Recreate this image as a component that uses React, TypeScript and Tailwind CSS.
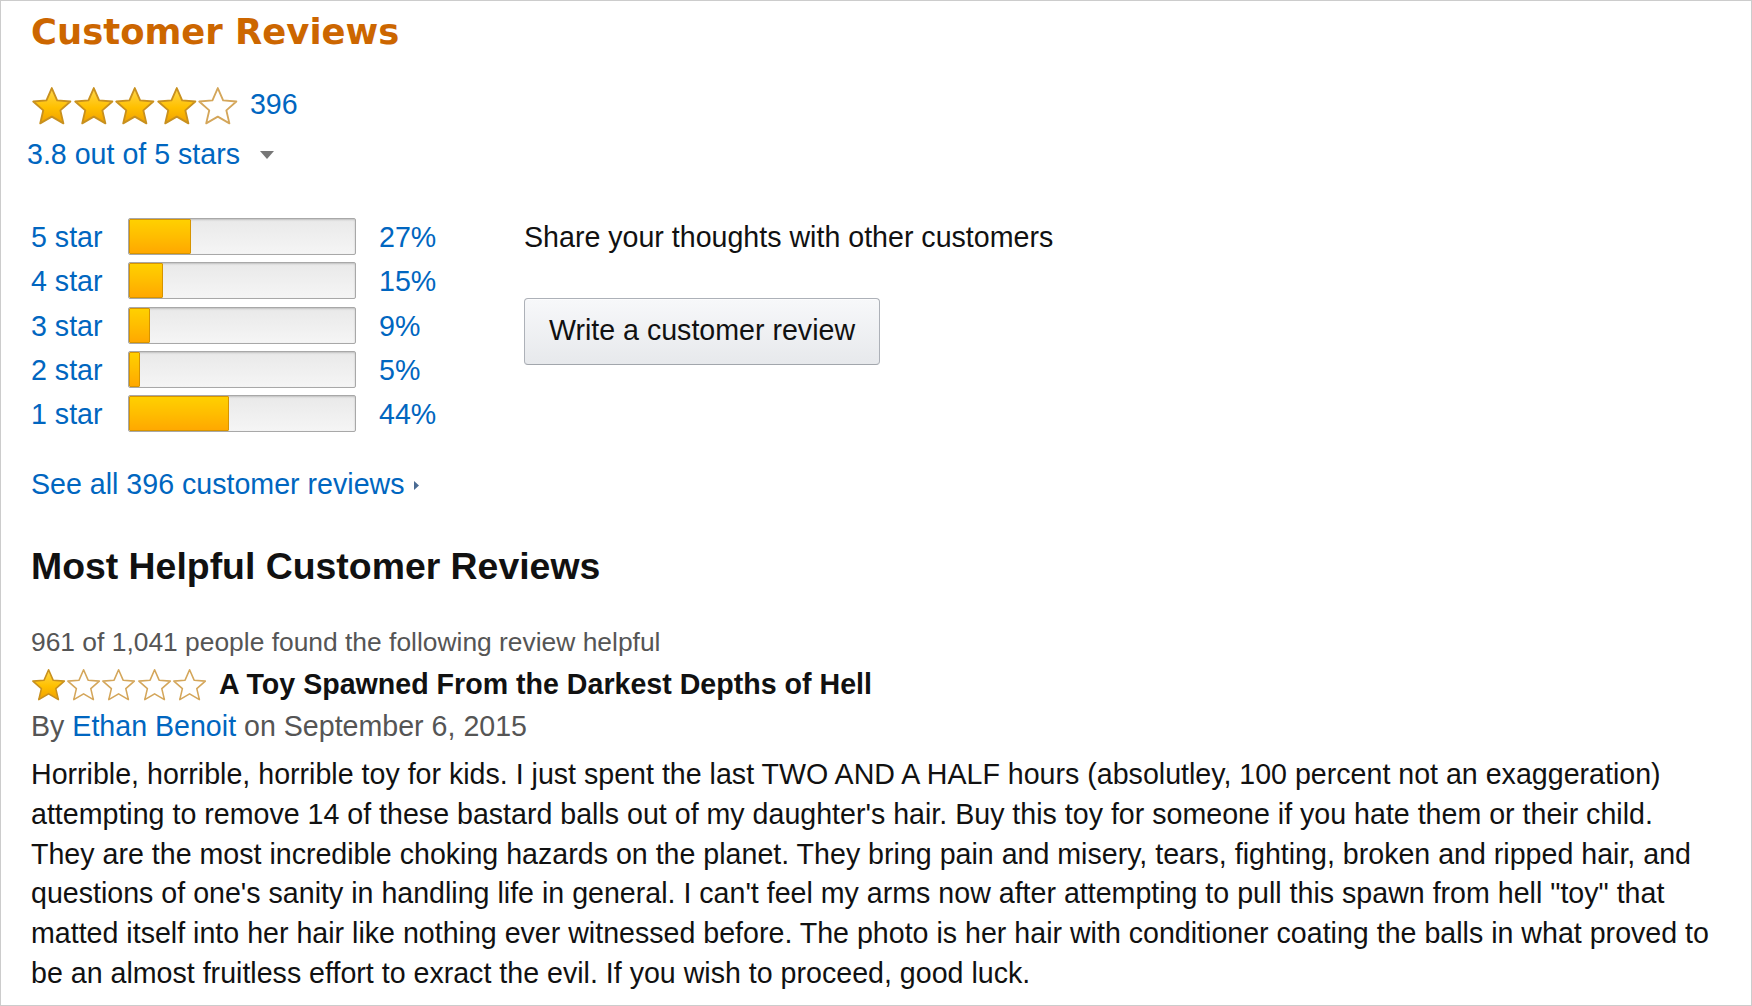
import React, { useId } from "react";

const STAR_POINTS =
  "20,2 25.2,14 38.1,15.1 28.3,23.7 31.3,36.4 20,29.8 8.7,36.4 11.7,23.7 1.9,15.1 14.8,14";

function Star({ filled, className }: { filled: boolean; className: string }) {
  const id = useId().replace(/:/g, "");
  return (
    <svg viewBox="0 0 40 38" className={className}>
      <defs>
        <linearGradient id={`g${id}`} x1="0" y1="0" x2="0" y2="1">
          <stop offset="0" stopColor="#ffd84d" />
          <stop offset="0.55" stopColor="#ffc000" />
          <stop offset="1" stopColor="#f0a000" />
        </linearGradient>
      </defs>
      <polygon
        points={STAR_POINTS}
        fill={filled ? `url(#g${id})` : "#ffffff"}
        stroke={filled ? "#c8901e" : "#d4a65a"}
        strokeWidth="1.8"
        strokeLinejoin="round"
      />
    </svg>
  );
}

const rows = [
  { label: "5 star", pct: 27 },
  { label: "4 star", pct: 15 },
  { label: "3 star", pct: 9 },
  { label: "2 star", pct: 5 },
  { label: "1 star", pct: 44 },
];

export default function App() {
  return (
    <div className="w-[1752px] h-[1006px] box-border border border-[#cccccc] bg-white pl-[30px] pt-[11px] font-['Liberation_Sans',Arial,sans-serif] text-[#111111] overflow-hidden">
      <h2 className="font-['DejaVu_Sans',Verdana,sans-serif] font-bold text-[35.4px] leading-[40px] text-[#cc6600]">
        Customer Reviews
      </h2>

      <div className="mt-[34px] flex items-center h-[39px]">
        <div className="flex">
          {[1, 2, 3, 4, 5].map((i) => (
            <Star key={i} filled={i <= 4} className="w-[41.6px] h-[39px]" />
          ))}
        </div>
        <span className="ml-[11px] -mt-[4px] text-[28.6px] leading-[34px] text-[#0066c0]">396</span>
      </div>

      <div className="mt-[12px] -ml-[4px] flex items-center h-[34px]">
        <span className="text-[28.6px] leading-[34px] text-[#0066c0]">3.8 out of 5 stars</span>
        <svg viewBox="0 0 14 8" className="ml-[20px] mt-[2px] w-[14px] h-[8px]">
          <polygon points="0,0 14,0 7,8" fill="#777777" />
        </svg>
      </div>

      <div className="mt-[47px] flex">
        <div className="flex flex-col gap-[7.25px]">
          {rows.map((r) => (
            <div key={r.label} className="flex items-center h-[37px]">
              <span className="w-[97px] pt-[1px] text-[28.6px] leading-[34px] text-[#0066c0]">{r.label}</span>
              <div className="w-[228px] h-[37px] box-border border border-[#a8a8a8] rounded-[2px] bg-linear-to-b from-[#e9e9e9] to-[#f5f5f5] shadow-[inset_0_1px_2px_rgba(0,0,0,0.18)] flex overflow-hidden">
                <div
                  className="h-full box-border border border-[#d69400] rounded-[1px] bg-linear-to-b from-[#ffd000] via-[#ffbd00] to-[#ffa800]"
                  style={{ width: `${(r.pct / 100) * 228}px` }}
                />
              </div>
              <span className="ml-[23px] w-[70px] pt-[1px] text-[28.6px] leading-[34px] text-[#0066c0]">{r.pct}%</span>
            </div>
          ))}
        </div>
        <div className="ml-[75px] flex flex-col items-start">
          <div className="h-[37px] pt-[1px] flex items-center text-[28.6px] leading-[34px] text-[#111111]">
            Share your thoughts with other customers
          </div>
          <button className="mt-[43px] w-[356px] h-[67px] pb-[3px] box-border border border-[#adb1b8] border-b-[#a2a6ac] rounded-[4px] bg-linear-to-b from-[#f7f8fa] to-[#e7e9ec] shadow-[inset_0_1px_0_rgba(255,255,255,0.6)] text-[28.6px] leading-[34px] text-[#111111]">
            Write a customer review
          </button>
        </div>
      </div>

      <div className="mt-[35px] flex items-center h-[34px]">
        <span className="text-[28.6px] leading-[34px] text-[#0066c0]">See all 396 customer reviews</span>
        <svg viewBox="0 0 5 9" className="ml-[10px] mt-[2px] w-[5px] h-[9px]">
          <polygon points="0,0 5,4.5 0,9" fill="#4a6b93" />
        </svg>
      </div>

      <h3 className="mt-[43px] font-bold text-[37.4px] leading-[44px] text-[#111111]">
        Most Helpful Customer Reviews
      </h3>

      <div className="mt-[38px] text-[26.4px] leading-[32px] text-[#555555]">
        961 of 1,041 people found the following review helpful
      </div>

      <div className="mt-[10px] flex items-center h-[32px]">
        <div className="flex">
          {[1, 2, 3, 4, 5].map((i) => (
            <Star key={i} filled={i <= 1} className="w-[35.2px] h-[33px]" />
          ))}
        </div>
        <span className="ml-[12px] font-bold text-[28.6px] leading-[34px] text-[#111111]">
          A Toy Spawned From the Darkest Depths of Hell
        </span>
      </div>

      <div className="mt-[9px] text-[28.6px] leading-[34px] text-[#555555]">
        By <span className="text-[#0066c0]">Ethan Benoit</span> on September 6, 2015
      </div>

      <p className="mt-[12px] w-[1691px] text-[28.6px] leading-[39.8px] text-[#111111]">
        Horrible, horrible, horrible toy for kids. I just spent the last TWO AND A HALF hours (absolutley, 100 percent not
        an exaggeration) attempting to remove 14 of these bastard balls out of my daughter's hair. Buy this toy for
        someone if you hate them or their child. They are the most incredible choking hazards on the planet. They bring
        pain and misery, tears, fighting, broken and ripped hair, and questions of one's sanity in handling life in
        general. I can't feel my arms now after attempting to pull this spawn from hell "toy" that matted itself into her
        hair like nothing ever witnessed before. The photo is her hair with conditioner coating the balls in what proved
        to be an almost fruitless effort to exract the evil. If you wish to proceed, good luck.
      </p>
    </div>
  );
}
